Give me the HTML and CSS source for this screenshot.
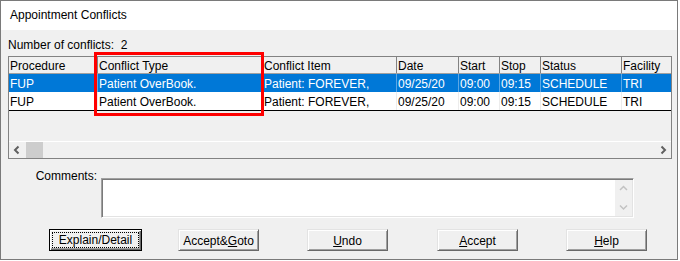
FILE: index.html
```html
<!DOCTYPE html>
<html>
<head>
<meta charset="utf-8">
<title>Appointment Conflicts</title>
<link rel="stylesheet" href="styles.css">
</head>
<body>
<div class="window">
  <div class="titlebar">Appointment Conflicts</div>
  <div class="body">
    <div class="count">Number of conflicts:&nbsp; 2</div>
    <div class="grid">
      <div class="row head">
        <div class="cell">Procedure</div>
        <div class="cell">Conflict Type</div>
        <div class="cell">Conflict Item</div>
        <div class="cell">Date</div>
        <div class="cell">Start</div>
        <div class="cell">Stop</div>
        <div class="cell">Status</div>
        <div class="cell">Facility</div>
      </div>
      <div class="row data sel">
        <div class="cell">FUP</div>
        <div class="cell">Patient OverBook.</div>
        <div class="cell">Patient: FOREVER,</div>
        <div class="cell">09/25/20</div>
        <div class="cell">09:00</div>
        <div class="cell">09:15</div>
        <div class="cell">SCHEDULE</div>
        <div class="cell">TRI</div>
      </div>
      <div class="row data last">
        <div class="cell">FUP</div>
        <div class="cell">Patient OverBook.</div>
        <div class="cell">Patient: FOREVER,</div>
        <div class="cell">09/25/20</div>
        <div class="cell">09:00</div>
        <div class="cell">09:15</div>
        <div class="cell">SCHEDULE</div>
        <div class="cell">TRI</div>
      </div>
      <div class="filler"></div>
      <div class="hscroll">
        <div class="sb-btn"><svg width="17" height="16" viewBox="0 0 17 16"><polyline points="9.5,4.5 6,8 9.5,11.5" fill="none" stroke="#606060" stroke-width="2"/></svg></div>
        <div class="thumb"></div>
        <div class="track"></div>
        <div class="sb-btn"><svg width="17" height="16" viewBox="0 0 17 16"><polyline points="7.5,4.5 11,8 7.5,11.5" fill="none" stroke="#606060" stroke-width="2"/></svg></div>
      </div>
      <div class="highlight"></div>
    </div>
    <div class="comments">
      <div class="comments-label">Comments:</div>
      <div class="textbox">
        <div class="text-area"></div>
        <div class="vscroll">
          <div class="vs-btn"><svg width="17" height="17" viewBox="0 0 17 17"><polyline points="5,10 8.5,6.5 12,10" fill="none" stroke="#c2c2c2" stroke-width="1.5"/></svg></div>
          <div class="vs-track"></div>
          <div class="vs-btn"><svg width="17" height="17" viewBox="0 0 17 17"><polyline points="5,6.5 8.5,10 12,6.5" fill="none" stroke="#c2c2c2" stroke-width="1.5"/></svg></div>
        </div>
      </div>
    </div>
    <div class="buttons">
      <div class="btn btn-default"><span class="focus">Explain/Detail</span></div>
      <div class="btn btn-goto">Accept&amp;<u>G</u>oto</div>
      <div class="btn btn-undo"><u>U</u>ndo</div>
      <div class="btn btn-accept"><u>A</u>ccept</div>
      <div class="btn btn-help"><u>H</u>elp</div>
    </div>
  </div>
</div>
</body>
</html>
```
FILE: styles.css
```css
* { box-sizing: border-box; }

body {
  margin: 0;
  background: #ffffff;
  font-family: "Liberation Sans", Arial, sans-serif;
  font-size: 12px;
  color: #000000;
}

.window {
  width: 678px;
  height: 260px;
  border: 1px solid #7a7a7a;
  background: #f0f0f0;
  display: flex;
  flex-direction: column;
}

.titlebar {
  height: 29px;
  background: #ffffff;
  padding: 7px 0 0 9px;
  line-height: 14px;
}

.body {
  padding: 8px 0 0 7px;
}

.count {
  line-height: 14px;
  height: 14px;
}

.grid {
  position: relative;
  margin-top: 4px;
  width: 664px;
  height: 103px;
  border: 1px solid #828282;
  background: #f0f0f0;
  display: flex;
  flex-direction: column;
}

.row {
  display: grid;
  grid-template-columns: 89px 165px 134px 62px 41px 41px 81px 49px;
  flex: none;
}

.cell {
  overflow: hidden;
  white-space: nowrap;
  padding-left: 1px;
}

.head {
  height: 17px;
  border-bottom: 1px solid #a0a0a0;
  background: #f0f0f0;
}

.head .cell {
  padding-top: 2px;
  line-height: 14px;
  border-right: 1px solid #828282;
}

.head .cell:last-child { border-right: none; }

.data {
  height: 18px;
  background: #ffffff;
}

.data .cell {
  padding-top: 2px;
  line-height: 16px;
  border-right: 1px solid #ececec;
}

.data .cell:last-child { border-right: none; }

.data.sel {
  background: #0078d7;
  color: #ffffff;
}

.data.sel .cell { border-right-color: #5da7e4; }

.data.last {
  height: 19px;
  border-bottom: 1px solid #000000;
}

.filler { flex: 1; }

.hscroll {
  height: 17px;
  border-top: 1px solid #ffffff;
  display: flex;
  background: #f0f0f0;
}

.sb-btn {
  width: 17px;
  height: 16px;
  flex: none;
}

.sb-btn svg { display: block; }

.thumb {
  width: 17px;
  height: 16px;
  background: #cdcdcd;
  flex: none;
}

.track { flex: 1; }

.highlight {
  position: absolute;
  left: 85px;
  top: -5px;
  width: 170px;
  height: 64px;
  border: 3px solid #ff0000;
}

.comments {
  display: flex;
  margin-top: 10px;
}

.comments-label {
  width: 93px;
  text-align: right;
  padding-right: 4px;
  line-height: 14px;
}

.textbox {
  margin-top: 9px;
  width: 533px;
  height: 40px;
  border-style: solid;
  border-width: 1px;
  border-color: #a0a0a0 #ffffff #ffffff #a0a0a0;
  box-shadow: inset 1px 1px #7a7a7a, inset -1px -1px #e3e3e3;
  background: #ffffff;
  display: flex;
  padding: 1px;
}

.text-area { flex: 1; }

.vscroll {
  width: 17px;
  background: #f0f0f0;
  display: flex;
  flex-direction: column;
}

.vs-btn { height: 17px; flex: none; }
.vs-btn svg { display: block; }
.vs-track { flex: 1; }

.buttons {
  display: flex;
  margin-top: 11px;
  padding-left: 41px;
}

.btn {
  width: 81px;
  height: 22px;
  background: #f0f0f0;
  border: 1px solid;
  border-color: #e3e3e3 #696969 #696969 #e3e3e3;
  box-shadow: inset 1px 1px #ffffff, inset -1px -1px #a0a0a0;
  display: flex;
  align-items: center;
  justify-content: center;
  line-height: 14px;
  padding-top: 1px;
}

.btn u { text-decoration: underline; }

.btn-default {
  width: 93px;
  border: 1px solid #000000;
  box-shadow: inset 1px 1px #ffffff, inset -1px -1px #696969, inset -2px -2px #a0a0a0;
  padding: 2px 2px 2px 2px;
  align-items: stretch;
}

.focus {
  flex: 1;
  border: 1px dotted #000000;
  display: flex;
  align-items: center;
  justify-content: center;
}

.btn-goto { margin-left: 36px; }
.btn-undo { margin-left: 48px; }
.btn-accept { margin-left: 49px; }
.btn-help { margin-left: 48px; }
```
